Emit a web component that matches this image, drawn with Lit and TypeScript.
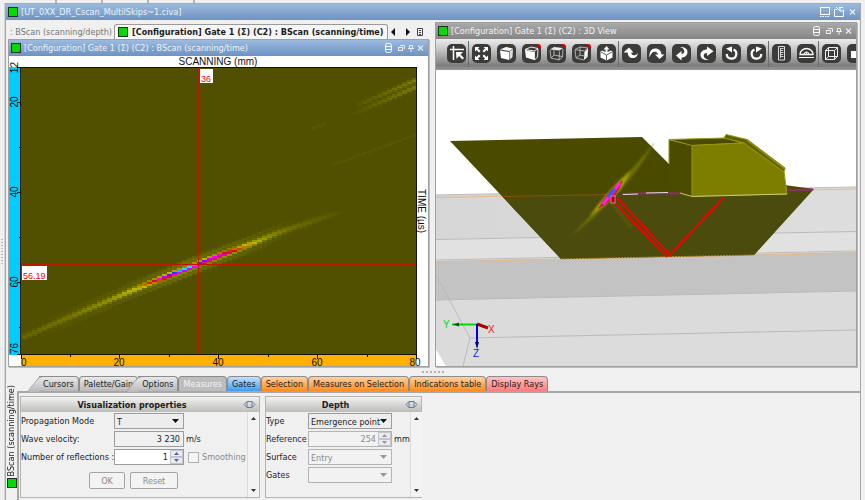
import { LitElement, html, svg, css, nothing } from "lit";
import { customElement, property } from "lit/decorators.js";

const FONT = css`
  * { box-sizing: border-box; }
  button, input, select { font: inherit; color: inherit; margin: 0; padding: 0; }
`;

/* Small white glyphs at the right end of a title bar. */
const dbGlyph = svg`<g fill="none" stroke="#fff"><rect x="1.5" y="1.5" width="6" height="9" rx="2"/><path d="M2 4.500h6M2 7.500h6"/></g>`;
const floatGlyph = svg`<g fill="none" stroke="#eee"><rect x="0.500" y="5.500" width="4" height="3"/><path d="M2 3.500h4.500v3.500"/></g>`;
const pinGlyph = svg`<g fill="none" stroke="#eee"><path d="M2.500 3.500h3v3h-3zM1 6.500h6M4 7v3"/></g>`;
const closeGlyph = svg`<path d="M2 3.500l5 5M7 3.500l-5 5" fill="none" stroke="#eee" stroke-width="1.1"/>`;
const dockGlyph = svg`<g fill="none" stroke="#fff"><rect x=".5" y="1.500" width="9" height="7"/><path d="M0 10.500h10" stroke-dasharray="1.500 1"/><path d="M0 8.500h10"/></g>`;
const restoreGlyph = svg`<g fill="none" stroke="#fff"><path d="M3 3.500h-2.500v7h9v-7"/><path d="M2 1l4 4M6 2v3M5 1.500h4M6 5h3"/></g>`;

@customElement("title-bar")
export class TitleBar extends LitElement {
  @property() label = "";
  @property() tone = "blue";
  @property({ type: Boolean }) main = false;

  static styles = [FONT, css`
    :host { display: block; }
    .bar { display: flex; align-items: center; height: 16px; padding: 0 3px 0 2px; color: #eef2f8; background: linear-gradient(#9bbbe0, #6c93c0); }
    .bar.gray { background: linear-gradient(#a9a9a9, #858585); }
    .led { flex: none; width: 10px; height: 10px; background: #00dc00; border: 1px solid #203020; margin-right: 3px; }
    .label { flex: 1; white-space: nowrap; overflow: hidden; line-height: 14px; }
    button { flex: none; display: block; border: 0; background: none; height: 12px; width: 9px; }
    .wide { width: 14px; }
    .mainbtn { width: 14px; }
    svg { display: block; width: 10px; height: 12px; overflow: visible; }
  `];

  render() {
    const icon = (name: string, glyph: unknown, cls = "") => html`
      <button class=${cls} aria-label=${name}><svg viewBox="0 0 10 12">${glyph}</svg></button>`;
    return html`
      <div class="bar ${this.tone}">
        <span class="led"></span><span class="label">${this.label}</span>
        ${this.main
          ? html`${icon("Dock", dockGlyph, "mainbtn")}${icon("Restore", restoreGlyph, "mainbtn")}${icon("Close", closeGlyph)}`
          : html`${icon("Data", dbGlyph, "wide")}${icon("Float", floatGlyph)}${icon("Pin", pinGlyph)}${icon("Close", closeGlyph)}`}
      </div>`;
  }
}

/* ---- B-scan plot ---- */
type Stop = [number, number, number, number];
const PALETTE: Stop[] = [
  [0, 80, 80, 0], [0.3, 140, 140, 0], [0.45, 190, 186, 0], [0.55, 200, 110, 0],
  [0.65, 210, 10, 20], [0.74, 255, 0, 255], [0.85, 130, 0, 255], [0.93, 30, 60, 255], [1, 0, 230, 255],
];
function interpolate(points: [number, number][], x: number): number {
  if (x <= points[0][0]) return points[0][1];
  for (let i = 1; i < points.length; i++) {
    const [x1, y1] = points[i];
    const [x0, y0] = points[i - 1];
    if (x <= x1) return y0 + ((y1 - y0) * (x - x0)) / (x1 - x0);
  }
  return points[points.length - 1][1];
}
function colour(v: number): string {
  const c = [1, 2, 3].map((k) => Math.round(interpolate(PALETTE.map((s) => [s[0], s[k]] as [number, number]), v)));
  return `rgb(${c.join(",")})`;
}
const RIDGE: [number, number][] = [[21, 338], [67, 318], [133, 290], [180, 271], [200, 263], [227, 253], [253, 243], [277, 233], [310, 222], [343, 211]];
const LEVEL: [number, number][] = [[21, 0.1], [70, 0.2], [110, 0.34], [135, 0.48], [145, 0.58], [155, 0.7], [164, 0.82], [175, 0.96], [183, 1.04], [192, 1.02], [200, 0.92], [210, 0.82], [222, 0.78], [232, 0.7], [242, 0.58], [254, 0.45], [272, 0.28], [290, 0.16], [310, 0.1], [335, 0.04], [345, 0]];
const UPPER: [number, number][] = [[353, 110], [416, 83]];
const FAR: [number, number][] = [[330, 165], [416, 134]];

function echoCells() {
  const cells: unknown[] = [];
  for (let x = 22; x < 416; x += 5) {
    const mid = interpolate(RIDGE, x + 2);
    const amp = interpolate(LEVEL, x + 2);
    for (let y = 68; y < 353; y += 2) {
      let v = 0;
      const d = y + 1 - mid;
      if (x < 345 && Math.abs(d) < 12) {
        v += amp * Math.exp(-(d * d) / 9);
        v += amp * 0.14 * Math.exp(-((Math.abs(d) - 7) ** 2) / 4);
      }
      if (x > 350) {
        const gain = ((x - 345) / 71) * 0.24;
        for (const shift of [-4, 3]) v += gain * Math.exp(-((y + 1 - interpolate(UPPER, x) - shift) ** 2) / 5);
      }
      if (x > 328) v += 0.035 * Math.exp(-((y + 1 - interpolate(FAR, x)) ** 2) / 5);
      if (x > 308 && x < 326) v += 0.04 * Math.exp(-((y + 1 - 126 + (x - 317) * 0.4) ** 2) / 4);
      if (v > 0.02) cells.push(svg`<rect x=${x} y=${y} width="5" height="2" fill=${colour(Math.min(v, 1))} />`);
    }
  }
  return cells;
}

@customElement("bscan-plot")
export class BscanPlot extends LitElement {
  static styles = css`
    :host { display: block; background: #fff; }
    svg { display: block; width: 100%; height: auto; overflow: visible; }
    .axis { font: 10px "Liberation Sans", Arial, sans-serif; fill: #111; }
    .mark { font: 9px "Liberation Sans", Arial, sans-serif; fill: #f00000; }
    .mid { text-anchor: middle; }
    .end { text-anchor: end; }
  `;
  render() {
    return html`<svg viewBox="9 56 419 310" role="img" aria-label="BScan, scanning versus time">
      <rect x="9" y="67" width="12" height="288" fill="#00ccff" />
      <rect x="21" y="355" width="395" height="11" fill="#ffb000" />
      <g shape-rendering="crispEdges">
        <rect x="21" y="67" width="395" height="287" fill="#505000" />
        ${echoCells()}
        <path d="M20 67.500H416.500V354M20.500 67V354H416" fill="none" stroke="#111" />
        <path d="M17 67.500h4M17 102.500h4M17 192.500h4M17 282.500h4M17 354.500h4M19 147.500h2M19 237.500h2M19 327.500h2" stroke="#111" />
        <path d="M21.500 354v5M119.500 354v5M218.500 354v5M317.500 354v5M416.500 354v5M70.500 354v3M169.500 354v3M268.500 354v3M367.500 354v3" stroke="#111" />
        <path d="M198.500 68V353M22 264.500H416" stroke="#c01800" />
      </g>
      <text class="axis mid" x="218" y="65">SCANNING (mm)</text>
      <text class="axis" transform="translate(418 189) rotate(90)">TIME (µs)</text>
      <text class="axis end" transform="translate(18 62) rotate(-90)">12</text>
      <text class="axis mid" transform="translate(18 102) rotate(-90)">20</text>
      <text class="axis mid" transform="translate(18 192) rotate(-90)">40</text>
      <text class="axis mid" transform="translate(18 282) rotate(-90)">60</text>
      <text class="axis" transform="translate(18 354) rotate(-90)">76</text>
      <text class="axis" x="21" y="366">0</text>
      <text class="axis mid" x="119" y="366">20</text>
      <text class="axis mid" x="218" y="366">40</text>
      <text class="axis mid" x="317" y="366">60</text>
      <text class="axis mid" x="415" y="366">80</text>
      <rect x="200" y="69" width="13" height="14" fill="#fff" /><text class="mark" x="201" y="82">36</text>
      <rect x="22" y="266" width="25" height="14" fill="#fff" /><text class="mark" x="23" y="279">56.19</text>
    </svg>`;
  }
}

/* ---- 3D view ---- */
@customElement("scene-view")
export class SceneView extends LitElement {
  static styles = css`
    :host { display: block; background: #fff; }
    svg { display: block; width: 100%; height: auto; }
    text { font: 10px "Liberation Sans", Arial, sans-serif; }
  `;
  render() {
    return html`<svg viewBox="436 70 420 296" role="img" aria-label="3D view of probe and specimen">
      <defs>
        <linearGradient id="slab"><stop offset="0" stop-color="#d6d6d6" /><stop offset="1" stop-color="#dedede" /></linearGradient>
        <filter id="soft"><feGaussianBlur stdDeviation="1" /></filter>
        <filter id="softer"><feGaussianBlur stdDeviation="0.6" /></filter>
      </defs>
      <path d="M436 195L856 187V366H446L436 349Z" fill="url(#slab)" />
      <path d="M436 239L856 231V252L436 261Z" fill="#e1e1e1" />
      <path d="M436 261L856 252V291L436 300Z" fill="#c3c3c3" />
      <path d="M436 300L856 291V366H446L436 349Z" fill="#dbdbdb" />
      <path d="M470 338L856 330V366H463Z" fill="#dcdcdc" />
      <g fill="none" stroke="#bababa">
        <path d="M436 195L856 187M436 239.500L856 231.500M436 260L856 251M436 275L470 338L463 366M470 338L856 330M436 300L856 291" />
      </g>
      <path d="M436 197.500L856 189M436 262L856 253" fill="none" stroke="#e6b98a" />
      <path d="M450 141L642 137L675 170L814 189L754 255L561 259Z" fill="#4b4b00" />
      <path d="M502 196L812 190L754 255L561 259Z" fill="#4b4b0e" />
      <path d="M502 196.500L610 194.500" stroke="#8a5200" />
      <path d="M561 259L754 255" stroke="#b98a40" stroke-dasharray="2 1" />
      <g filter="url(#soft)">
        <path d="M571 236Q604 202 655 142Q637 175 606 205Q590 222 571 236Z" fill="#6e6e00" />
        <path d="M589 217Q609 189 631 170Q622 191 606 204Z" fill="#a8a300" />
        <path d="M612 203L632 228" stroke="#57570c" stroke-width="4" />
      </g>
      <g filter="url(#softer)">
        <path d="M598 209Q608 190 623 180Q618 196 603 206Z" fill="#d01840" />
        <path d="M603 204L620 183" stroke="#ff20f0" stroke-width="3" />
        <path d="M608 197L615 189" stroke="#4050ff" stroke-width="3" />
      </g>
      <path d="M622 194L660 193L680 193.500M788 190.500L813 189.500" fill="none" stroke="#8e2d70" stroke-width="2" />
      <path d="M623 194.500L638 194M646 193L668 192.500" stroke="#ddd" />
      <g fill="none" stroke="#f40000" stroke-width="2">
        <path d="M613 201L667 257M617 198L671 256M669 256L724 197" />
      </g>
      <rect x="611" y="196" width="4" height="7" fill="#a00018" stroke="#e08080" />
      <path d="M669 140L692 145V196L669 189Z" fill="#4c4c00" />
      <g stroke="#96960e" stroke-linejoin="round">
        <path d="M669 139.500L726 138L742 143L692 145.500Z" fill="#4b4b00" />
        <path d="M692 145.500L744 143L784 172L787 194L692 196Z" fill="#7d7d00" />
        <path d="M726 134.500L747 139.500L785 168L784 172L744 143L724 138Z" fill="#606000" />
        <path d="M669 164V139.500" />
      </g>
      <path d="M747 140L785 169" stroke="#8c8c08" stroke-width="2" />
      <path d="M680 193L692 196.500L787 194" fill="none" stroke="#c9c96a" />
      <path d="M477 324L488 328" stroke="#a80000" stroke-width="3" />
      <path d="M452 324.500H477" stroke="#00d800" stroke-width="2" />
      <path d="M453 324.500l6-2v4z" fill="#006000" />
      <path d="M477 324V346" stroke="#0000e8" stroke-width="2" />
      <path d="M475 342h4l-2 7z" fill="#000080" />
      <text x="443" y="328" fill="#00e000">Y</text>
      <text x="488" y="333" fill="#f02020">X</text>
      <text x="473" y="357" fill="#2020f0">Z</text>
    </svg>`;
  }
}

/* ---- 3D toolbar ---- */
const corner = svg`<path d="M14 0h2a3 3 0 0 1 3 3v2z" fill="#e00000"/>`;
const ICONS: { name: string; art: unknown; split?: boolean }[] = [
  { name: "Pick", art: svg`<path d="M3 5.500h14M6.500 2v14" stroke="#fff" stroke-width="1.500" fill="none"/><path d="M9 8h7l-2.500 2.500 3.500 3.500-1.500 1.500-3.500-3.500L9.500 15z" fill="#fff"/>` },
  { name: "Fit", split: true, art: svg`<path d="M3 3h4.500L6 4.500l2.500 2.500-1.500 1.500L4.500 6 3 7.500zM16 3v4.500L14.500 6 12 8.500 10.500 7 13 4.500 11.500 3zM3 16v-4.500L4.500 13 7 10.500 8.500 12 6 14.500 7.500 16zM16 16h-4.500l1.500-1.500-2.500-2.500 1.500-1.500 2.500 2.500 1.500-1.500z" fill="#fff"/>` },
  { name: "Solid", art: svg`<path d="M3 5.500l6-2.500 7 1.500-3.500 2.500z" fill="#fff"/><path d="M3 6.500l9 1.500v8l-8-2z" fill="#fff"/><path d="M12.500 7.500l3.500-2.500-.5 8-3 3z" fill="#ddd"/>` },
  { name: "Shaded", art: svg`<path d="M3 6l9 2v8l-8-2.500z" fill="#fff"/><path d="M3 5.500l6-2.500 7 1.500-3.500 2.500zM12.500 7.500V16L15.500 13l.5-8" fill="none" stroke="#fff" stroke-width=".9"/>${corner}` },
  { name: "Top face", art: svg`<path d="M3 5.500l4-2.500 9 1-3.500 2.500z" fill="#eee"/><path d="M3 6l1 8 8 2 .500-8.500M12 16l3.500-3L16 5M7 4v7l-3 3M7 11l8 1.500" fill="none" stroke="#ccc" stroke-width=".8"/>${corner}` },
  { name: "Side face", art: svg`<path d="M12.500 8L16 4.500 15.500 13 12 16z" fill="#fff"/><path d="M3 5.500L8 3l8 1-3.500 3zM3 6l1 8 8 2M8 3v8l-4 3M8 11l7 1.500" fill="none" stroke="#ccc" stroke-width=".8"/>${corner}` },
  { name: "Explode", art: svg`<path d="M9.500 2l3 3.500h-2V8l3.500-1.500 1.500 1v6l-6 3-6-3v-6l1.500-1L8.500 8V5.500h-2z" fill="#fff"/><path d="M4 8l5.500 3L15 8M9.500 11v5" fill="none" stroke="#3a3a38" stroke-width=".8"/>` },
  { name: "Turn up", split: true, art: svg`<path d="M5.500 7c0 4.500 2 7 5 7 3.500 0 5-2 5.500-5-1.200 1.600-2.500 2.300-4 2.300-2 0-3-1.500-3-4.300z" fill="#fff"/><path d="M1.500 8.500L7 3.500l4.500 5z" fill="#fff"/>` },
  { name: "Turn over", art: svg`<path d="M2.500 13.500C2 8 4 4.500 8 4.500c4 0 6.500 2.500 6.500 6.500h-3.500c0-2-1.300-3.300-3.300-3.300-2.200 0-4 1.800-5.200 5.800z" fill="#fff"/><path d="M8 10.500h9.500L12.500 15z" fill="#fff"/>` },
  { name: "Turn back", art: svg`<path d="M8 3c5 0 7.500 2 7.500 5 0 3.500-2.500 5.500-6.500 5.500v-3.500c2 0 3.300-.8 3.300-2.500C12.300 5.300 11 4 8 3z" fill="#fff"/><path d="M9.500 7v9.500L4 11.500z" fill="#fff"/>` },
  { name: "Turn forward", art: svg`<path d="M12 16c-5 .5-8.500-1.500-8.500-5 0-3.300 2.500-5.500 7-5.500V9c-2.500 0-3.800.8-3.800 2.500C6.700 13.500 8.500 15 12 16z" fill="#fff"/><path d="M10 2.500V12l6.500-4.800z" fill="#fff"/>` },
  { name: "Rotate left", art: svg`<path d="M11.500 5.500a4.800 4.800 0 1 1-6.800 4.500" fill="none" stroke="#fff" stroke-width="2.200"/><path d="M4 4.500l6-2v6z" fill="#fff"/>` },
  { name: "Rotate right", art: svg`<path d="M7.500 5.500a4.800 4.800 0 1 0 6.800 4.500" fill="none" stroke="#fff" stroke-width="2.200"/><path d="M15 4.500l-6-2v6z" fill="#fff"/>` },
  { name: "Ruler", split: true, art: svg`<path d="M6.500 2.500h6v13.500h-6z" fill="none" stroke="#ddd"/><path d="M8.500 4v10M9 4.500h2.500M9 6.500h2M9 8.500h2.500M9 10.500h2M9 12.500h2.500" stroke="#ddd" stroke-width=".9" fill="none"/>` },
  { name: "Protractor", art: svg`<path d="M3 10.500a6.500 6 0 0 1 13 0z" fill="none" stroke="#fff" stroke-width="1.300"/><path d="M7 10.500a2.500 2.500 0 0 1 5 0M2 13.500h15M9.500 8v3" fill="none" stroke="#fff"/>` },
  { name: "Bounding box", split: true, art: svg`<path d="M3.500 6.500h9v9h-9zM3.500 6.500l3-3h9v9l-3 3M12.500 6.500l3-3M6.500 3.500v9h9M6.500 12.500l-3 3" fill="none" stroke="#fff" stroke-width=".9"/>` },
  { name: "Block", art: svg`<path d="M4 7h10v7H4z" fill="#fff"/>` },
];

@customElement("view-toolbar")
export class ViewToolbar extends LitElement {
  static styles = [FONT, css`
    :host { display: block; min-width: 0; }
    .bar { display: flex; align-items: center; gap: 6px; height: 31px; padding: 0 0 2px 11px; overflow: hidden; background: linear-gradient(#ececec, #c4c4c4 35%, #8e8e8e 75%, #7c7c7c 85%, #989898); }
    button { position: relative; flex: none; width: 19px; height: 19px; border: 0; border-radius: 5px; background: #3b3b39; }
    button svg { display: block; width: 19px; height: 19px; }
    .split::before { content: ""; position: absolute; left: -4px; top: -3px; width: 1px; height: 26px; background: #6c6c6c; }
  `];
  render() {
    return html`<div class="bar">${ICONS.map((i) => html`
      <button class=${i.split ? "split" : nothing} aria-label=${i.name}><svg viewBox="0 0 19 19">${i.art}</svg></button>`)}</div>`;
  }
}

const TABS: [string, string][] = [
  ["Cursors", "lean"], ["Palette/Gain", ""], ["Options", "lean"], ["Measures", "off"], ["Gates", "blue"],
  ["Selection", "orange"], ["Measures on Selection", "orange"], ["Indications table", "orange"], ["Display Rays", "pink"],
];

@customElement("app-root")
export class AppRoot extends LitElement {
  static styles = [FONT, css`
    :host { display: block; min-height: 100vh; background: #f0f0f0; color: #1c1c1c; font: 9px/14px "DejaVu Sans Condensed", "DejaVu Sans", sans-serif; font-stretch: condensed; overflow: hidden; }
    .page { display: grid; grid-template-columns: 5px minmax(0, 1fr); padding-right: 4px; }
    .strip { grid-column: 1 / -1; display: flex; gap: 44px; height: 3px; padding-left: 55px; }
    .strip i { width: 2px; background: #b4b4b4; }
    .gutter { display: flex; align-items: center; border-right: 1px solid #d4d4d4; }
    .dots { width: 4px; height: 27px; background: radial-gradient(circle, #b8b8b8 1px, transparent 1px) 0 0 / 4px 3px; }
    .frame { border: solid #a8a8a8; border-width: 1px 1px 0; }
    .views { display: grid; grid-template-columns: minmax(0, 421fr) minmax(0, 422fr); gap: 6px; padding: 2px 3px 0 2px; }
    .left { padding-top: 2px; }
    .doc-tabs { display: flex; align-items: stretch; height: 15px; line-height: 14px; }
    .doc-tabs button { border: 0; background: none; white-space: nowrap; text-align: left; }
    .doc-tabs .back { width: 106px; color: #777; padding-left: 2px; }
    .doc-tabs .front { display: flex; align-items: center; gap: 4px; border: 1px solid #9a9a9a; border-bottom: 0; border-radius: 3px 3px 0 0; background: #f6f6f6; font-weight: bold; padding: 0 3px; }
    .led { flex: none; width: 10px; height: 10px; background: #00dc00; border: 1px solid #203020; }
    .nav { display: flex; margin-left: auto; padding-right: 4px; gap: 3px; }
    .nav svg { display: block; width: 10px; height: 12px; }
    .pane { border: 1px solid #a0a0a0; box-shadow: 1px 1px 0 #bbb; }
    .grip { display: flex; align-items: center; height: 9px; }
    .handle { height: 4px; width: 24px; margin: 0 auto; background: radial-gradient(circle, #b0b0b0 1px, transparent 1px) 0 0 / 4px 4px; }
    .lower { display: grid; grid-template-columns: 11px minmax(0, 1fr); }
    .side { display: flex; flex-direction: column; align-items: center; justify-content: flex-end; gap: 2px; padding: 0 0 12px; border: 0; background: none; }
    .side span { writing-mode: vertical-rl; transform: rotate(180deg); line-height: 11px; white-space: nowrap; }
    .tabs { display: flex; height: 15px; padding-left: 22px; }
    .tabs button { position: relative; flex: none; height: 15px; padding: 0 4px 0 4px; border: 1px solid #8c8c8c; border-bottom: 0; border-radius: 4px 4px 0 0; background: linear-gradient(#e9e9e9, #b9b9b9); white-space: nowrap; line-height: 13px; }
    .tabs .lean { border-left: 0; border-radius: 0 4px 0 0; z-index: 1; }
    .tabs .lean::before { content: ""; position: absolute; z-index: -1; left: -6px; top: -1px; width: 12px; height: 15px; border: solid #8c8c8c; border-width: 1px 0 0 1px; border-radius: 4px 0 0 0; background: linear-gradient(#e9e9e9, #b9b9b9); transform: skewX(-40deg); }
    .tabs .off { color: #f4f4f4; background: #bdbdbd; }
    .tabs .blue { background: linear-gradient(#c4e1fb, #3c9df5); }
    .tabs .orange { background: linear-gradient(#ffd2a0, #ff8a1c); }
    .tabs .pink { background: linear-gradient(#ffc4c4, #ff7a7a); }
    .sheet { display: flex; align-items: flex-start; gap: 5px; border-top: 2px solid #a8a8a8; border-left: 2px solid #a8a8a8; padding: 3px 0 2px 1px; }
    .card { border: 1px solid #b4b4b0; width: 240px; display: flex; flex-direction: column; }
    .card.depth { width: 157px; }
    .head { display: flex; align-items: center; height: 15px; padding-right: 3px; background: linear-gradient(#f2f2f0, #bcbcb8); }
    h2 { flex: 1; margin: 0; font: inherit; font-weight: bold; text-align: center; }
    .head svg { flex: none; width: 13px; height: 9px; }
    .body { display: flex; height: 85px; }
    .form { flex: 1; display: grid; grid-template-columns: 93px 70px 1fr; grid-auto-rows: 16px; row-gap: 2px; align-content: start; padding-top: 1px; line-height: 16px; white-space: nowrap; }
    .depth .form { grid-template-columns: 42px 84px 1fr; }
    .unit { padding-left: 2px; }
    .field { display: block; width: 100%; height: 16px; border: 1px solid #9c9c9c; border-radius: 0; background: #fff; text-align: right; padding: 0 3px; outline: 0; }
    .field.read { background: #f0f0f0; }
    select.field { appearance: none; text-align: left; padding: 0 2px; background: #ededed url("data:image/svg+xml,%3Csvg xmlns='http://www.w3.org/2000/svg' width='8' height='4'%3E%3Cpath d='M0 0h7L3.500 4z' fill='%23111'/%3E%3C/svg%3E") no-repeat right 3px center; }
    select.field:disabled { color: #8a8a8a; border-color: #b4b4b4; opacity: 1; background: #f2f2f2 url("data:image/svg+xml,%3Csvg xmlns='http://www.w3.org/2000/svg' width='8' height='4'%3E%3Cpath d='M0 0h7L3.500 4z' fill='%23999'/%3E%3C/svg%3E") no-repeat right 3px center; }
    .spin { display: grid; grid-template-columns: minmax(0, 1fr) 13px; border: 1px solid #9c9c9c; background: #fff; height: 16px; }
    .spin .field { border: 0; height: 14px; background: none; padding: 0 2px; }
    .spin.off { background: #f2f2f2; color: #8a8a8a; border-color: #b4b4b4; }
    .steps { display: grid; grid-template-rows: 7px 7px; background: #e4e4e4; }
    .steps button { border: 1px solid #c4c4cc; background: #eaeaf0; display: grid; place-items: center; min-height: 0; }
    .steps svg { width: 5px; height: 3px; display: block; }
    .check { display: flex; align-items: center; gap: 3px; padding-left: 4px; color: #8a8a8a; }
    .check input { appearance: none; width: 11px; height: 11px; border: 1px solid #b0b0b0; background: #f4f4f4; }
    .actions { grid-column: 1 / -1; display: flex; gap: 5px; padding: 5px 0 0 68px; }
    .actions button { flex: none; height: 17px; line-height: 14px; border: 1px solid #a4a4a4; border-radius: 2px; background: #f3f3f3; color: #8a8a8a; width: 48px; }
    .actions .ok { width: 36px; }
    .scroll { width: 12px; flex: none; border-left: 1px solid #dcdcdc; background: #f3f3f3; display: flex; flex-direction: column; justify-content: space-between; align-items: center; padding: 5px 0; }
    .scroll svg { width: 5px; height: 3px; display: block; }
  `];

  private arrow(up: boolean, fill = "#333") {
    return html`<svg viewBox="0 0 5 3"><path d=${up ? "M0 3h5L2.500 0z" : "M0 0h5L2.500 3z"} fill=${fill} /></svg>`;
  }
  private head(title: string) {
    return html`<div class="head"><h2>${title}</h2>
      <svg viewBox="0 0 13 9" fill="none" stroke="#5c7fa8"><path d="M4 1.500L1 4.500l3 3M9 1.500l3 3-3 3M4 1.500h5v6H4z" /></svg></div>`;
  }
  private scroll() {
    return html`<div class="scroll">${this.arrow(true)}${this.arrow(false)}</div>`;
  }
  private spinner(id: string, value: string, off = false) {
    const ink = off ? "#999" : "#4a68a8";
    return html`<span class="spin ${off ? "off" : ""}">
      <input class="field" id=${id} .value=${value} ?disabled=${off} />
      <span class="steps"><button aria-label="Increase" ?disabled=${off}>${this.arrow(true, ink)}</button><button aria-label="Decrease" ?disabled=${off}>${this.arrow(false, ink)}</button></span></span>`;
  }

  render() {
    return html`<div class="page">
      <div class="strip"><i></i><i></i><i></i><i></i></div>
      <div class="gutter"><span class="dots"></span></div>
      <main class="frame">
        <title-bar main label="[UT_0XX_DR_Cscan_MultilSkips~1.civa]"></title-bar>
        <div class="views">
          <section class="left">
            <nav class="doc-tabs">
              <button class="back">: BScan (scanning/depth)</button>
              <button class="front"><span class="led"></span>[Configuration] Gate 1 (Σ) (C2) : BScan (scanning/time)</button>
              <span class="nav">
                <button aria-label="Previous"><svg viewBox="0 0 10 12"><path d="M6 2v8L2 6z" fill="#111" /></svg></button>
                <button aria-label="Next"><svg viewBox="0 0 10 12"><path d="M4 2v8l4-4z" fill="#111" /></svg></button>
                <button aria-label="List"><svg viewBox="0 0 10 12"><path d="M2.500 2.500h5v7h-5zM4 4.500h2M4 6.500h2M4 8.500h2" fill="none" stroke="#444" /></svg></button>
              </span>
            </nav>
            <div class="pane">
              <title-bar label="[Configuration] Gate 1 (Σ) (C2) : BScan (scanning/time)"></title-bar>
              <bscan-plot></bscan-plot>
            </div>
          </section>
          <section class="pane">
            <title-bar tone="gray" label="[Configuration] Gate 1 (Σ) (C2) : 3D View"></title-bar>
            <view-toolbar></view-toolbar>
            <scene-view></scene-view>
          </section>
        </div>
        <div class="grip"><div class="handle"></div></div>
        <div class="lower">
          <button class="side"><span>BScan (scanning/time)</span><i class="led"></i></button>
          <div>
            <nav class="tabs">${TABS.map(([t, c]) => html`<button class=${c}>${t}</button>`)}</nav>
            <div class="sheet">
              <section class="card">
                ${this.head("Visualization properties")}
                <div class="body">
                  <div class="form">
                    <label for="mode">Propagation Mode</label>
                    <select class="field" id="mode"><option>T</option></select><span></span>
                    <label for="wave">Wave velocity:</label>
                    <input class="field read" id="wave" readonly .value=${"3 230"} /><span class="unit">m/s</span>
                    <label for="refl">Number of reflections :</label>
                    ${this.spinner("refl", "1")}
                    <label class="check"><input type="checkbox" disabled />Smoothing</label>
                    <div class="actions"><button class="ok" disabled>OK</button><button disabled>Reset</button></div>
                  </div>
                  ${this.scroll()}
                </div>
              </section>
              <section class="card depth">
                ${this.head("Depth")}
                <div class="body">
                  <div class="form">
                    <label for="type">Type</label>
                    <select class="field" id="type"><option>Emergence point</option></select><span></span>
                    <label for="ref">Reference</label>
                    ${this.spinner("ref", "254", true)}<span class="unit">mm</span>
                    <label for="surface">Surface</label>
                    <select class="field" id="surface" disabled><option>Entry</option></select><span></span>
                    <label for="gates">Gates</label>
                    <select class="field" id="gates" disabled><option></option></select><span></span>
                  </div>
                  ${this.scroll()}
                </div>
              </section>
            </div>
          </div>
        </div>
      </main>
    </div>`;
  }
}
